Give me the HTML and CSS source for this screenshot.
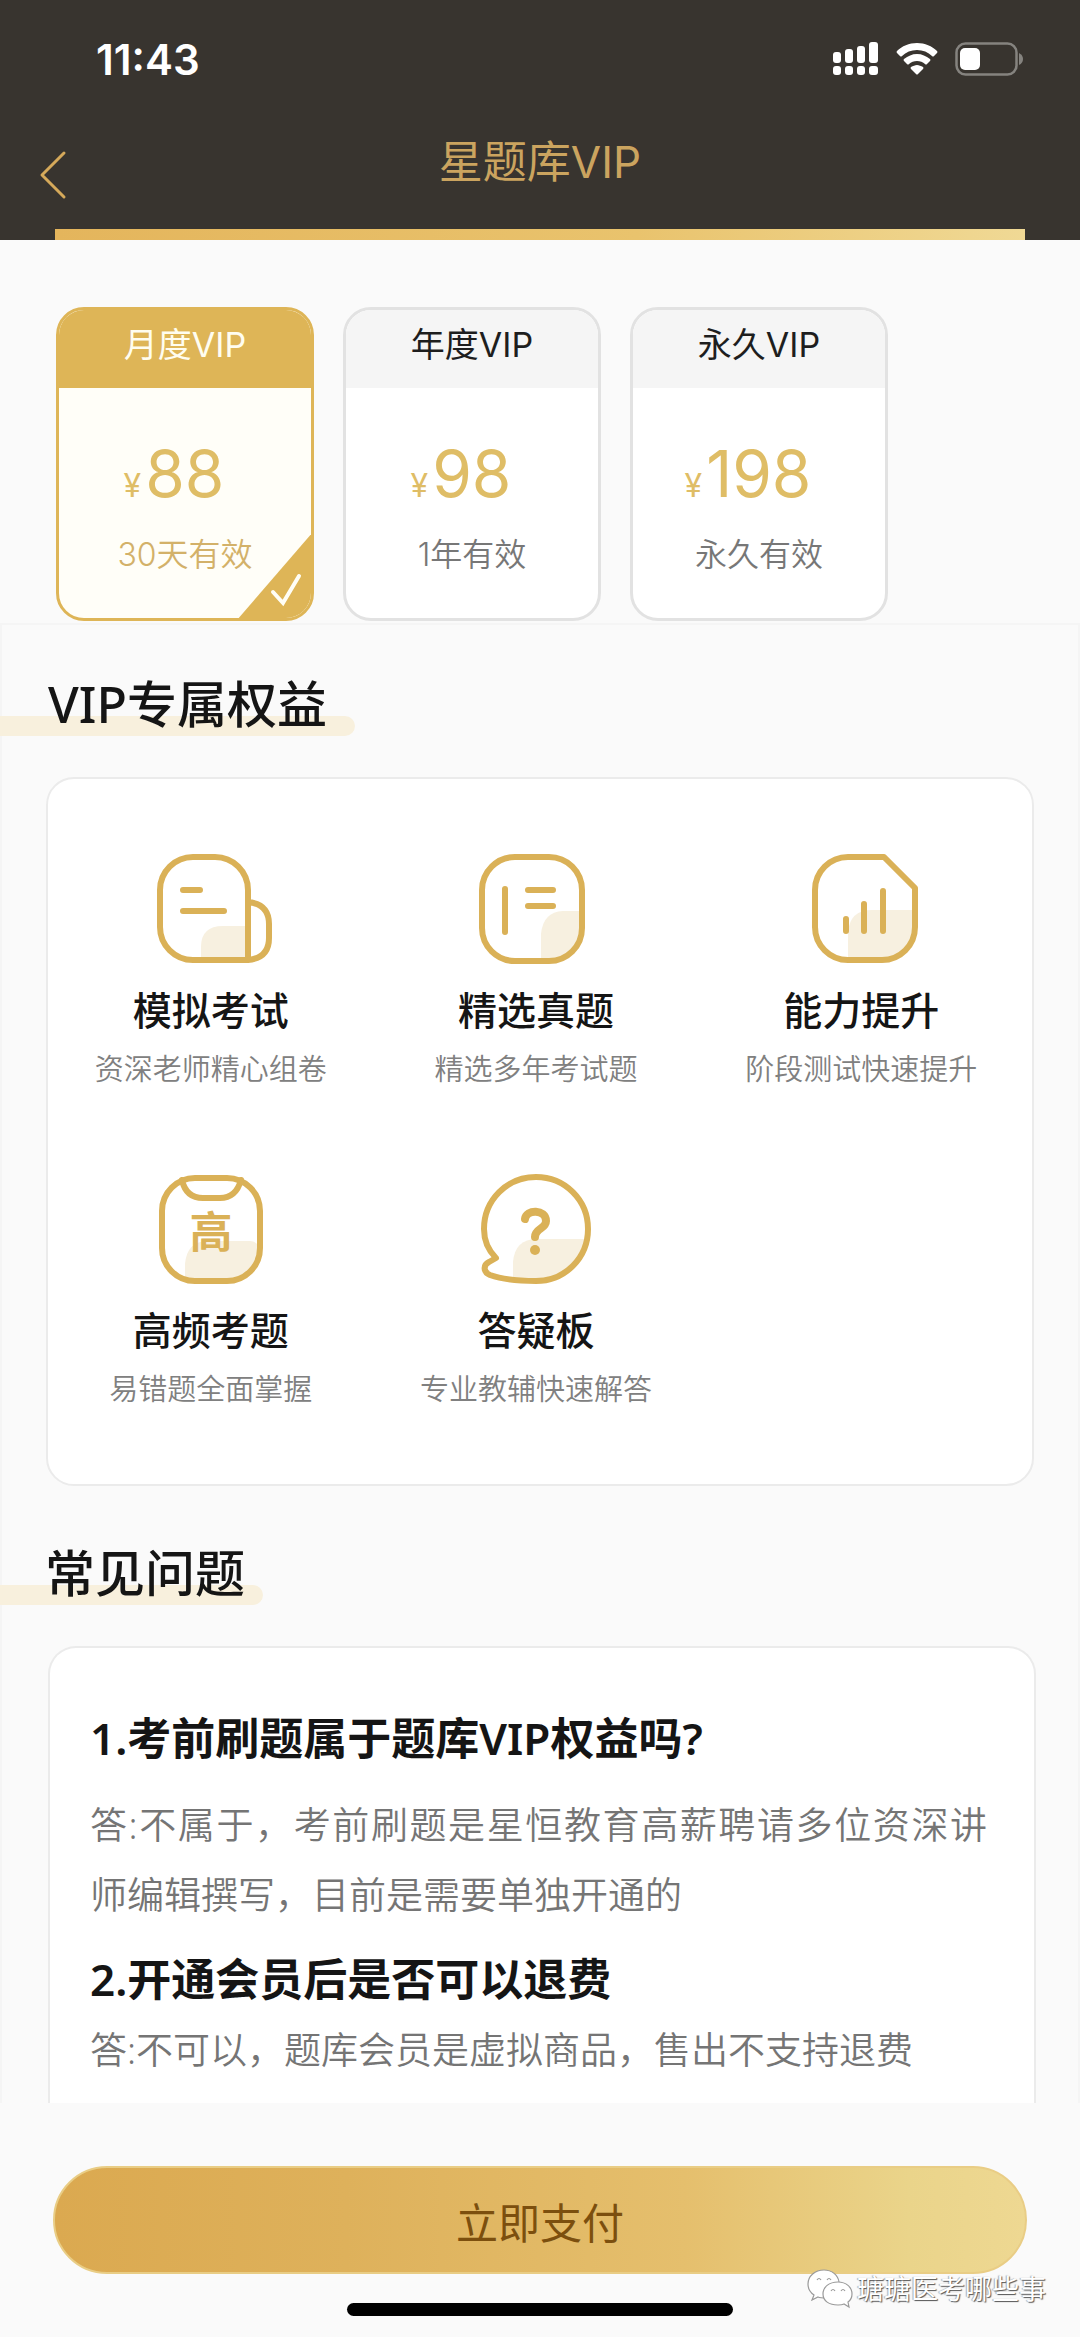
FILE: index.html
```html
<!DOCTYPE html>
<html lang="zh-CN">
<head>
<meta charset="utf-8">
<meta name="viewport" content="width=device-width, initial-scale=1">
<title>星题库VIP</title>
<link rel="stylesheet" href="styles.css">
</head>
<body>
<div class="app">
  <header class="top">
    <div class="status">
      <time class="clock">11:43</time>
      <div class="status-icons">
        <svg width="46" height="34" viewBox="0 0 46 34" fill="#fff" aria-hidden="true">
          <rect x="0" y="10" width="8" height="11" rx="3"/><rect x="12" y="7" width="8" height="14" rx="3"/><rect x="24" y="4" width="8" height="17" rx="3"/><rect x="36" y="0" width="9" height="21" rx="3"/>
          <rect x="0" y="24" width="8" height="9" rx="3"/><rect x="12" y="24" width="8" height="9" rx="3"/><rect x="24" y="24" width="8" height="9" rx="3"/><rect x="36" y="24" width="9" height="9" rx="3"/>
        </svg>
        <svg width="42" height="32" viewBox="0 0 42 32" fill="#fff" aria-hidden="true">
          <path d="M21 0C29 0 36 3 41 8Q42 9 41 10L38 13Q37 14 36 13C32 9 27 7 21 7S10 9 6 13Q5 14 4 13L1 10Q0 9 1 8C6 3 13 0 21 0Z"/>
          <path d="M21 11C26 11 30 13 34 16Q35 17 34 18L31 21Q30 22 29 21C27 19 24 18 21 18S15 19 13 21Q12 22 11 21L8 18Q7 17 8 16C12 13 16 11 21 11Z"/>
          <path d="M21 22C23 22 25 23 27 24Q28 25 27 26L22 31Q21 32 20 31L15 26Q14 25 15 24C17 23 19 22 21 22Z"/>
        </svg>
        <svg width="69" height="34" viewBox="0 0 69 34" aria-hidden="true">
          <rect x="1.5" y="1.500" width="60" height="31" rx="9" fill="none" stroke="#85837f" stroke-width="2.500"/>
          <rect x="5" y="6" width="20" height="22" rx="5" fill="#fff"/>
          <path d="M64 11Q68 13 68 17T64 23Z" fill="#85837f"/>
        </svg>
      </div>
    </div>
    <nav class="nav">
      <button class="back" type="button" aria-label="返回">
        <svg width="28" height="50" viewBox="0 0 28 50" fill="none" stroke="#d5a95a" stroke-width="3" stroke-linecap="round" stroke-linejoin="round" aria-hidden="true"><path d="M25 3L3 25L25 47"/></svg>
      </button>
      <h1 class="title">星题库VIP</h1>
    </nav>
    <div class="banner-edge"></div>
  </header>

  <main>
    <div class="plans">
      <button class="plan plan-active" type="button" aria-pressed="true">
        <span class="plan-name">月度VIP</span>
        <span class="plan-price"><span class="yen">¥</span>88</span>
        <span class="plan-term">30天有效</span>
        <svg class="plan-check" width="76" height="88" viewBox="0 0 76 88" aria-hidden="true"><path d="M76 0V88H0Z" fill="#deb557"/><path d="M36 60L46 71L62 44" fill="none" stroke="#fffef6" stroke-width="4" stroke-linecap="round"/></svg>
      </button>
      <button class="plan" type="button" aria-pressed="false">
        <span class="plan-name">年度VIP</span>
        <span class="plan-price"><span class="yen">¥</span>98</span>
        <span class="plan-term">1年有效</span>
      </button>
      <button class="plan" type="button" aria-pressed="false">
        <span class="plan-name">永久VIP</span>
        <span class="plan-price"><span class="yen">¥</span>198</span>
        <span class="plan-term">永久有效</span>
      </button>
    </div>

    <div class="details">
      <section>
        <h2 class="heading">VIP专属权益</h2>
        <ul class="card benefits">
          <li class="benefit">
            <svg class="icon" width="124" height="110" viewBox="-8 0 124 110" aria-hidden="true">
              <path d="M44 107V93Q44 72 66 72H88V107Z" class="tint"/>
              <path d="M91 106H36A33 33 0 0 1 3 73V36A33 33 0 0 1 36 3H58A33 33 0 0 1 91 36V106Q112 104 112 84V70Q112 50 91 48"/>
              <path d="M26 36H43M26 57H67"/>
            </svg>
            <h3>模拟考试</h3>
            <p>资深老师精心组卷</p>
          </li>
          <li class="benefit">
            <svg class="icon" width="114" height="110" viewBox="0 0 114 110" aria-hidden="true">
              <path d="M62 106V80Q64 58 84 57H103V73Q100 100 72 106Z" class="tint"/>
              <rect x="3" y="3" width="100" height="104" rx="33"/>
              <path d="M26 35V78M49 36H74M49 52H74"/>
            </svg>
            <h3>精选真题</h3>
            <p>精选多年考试题</p>
          </li>
          <li class="benefit">
            <svg class="icon" width="114" height="110" viewBox="-8 0 114 110" aria-hidden="true">
              <path d="M36 106V78Q38 56 60 56H102V73Q98 103 70 106Z" class="tint"/>
              <path d="M36 3H72L103 34V73A33 33 0 0 1 70 106H36A33 33 0 0 1 3 73V36A33 33 0 0 1 36 3Z"/>
              <path d="M34 65V77M52 50V77M71 37V77"/>
            </svg>
            <h3>能力提升</h3>
            <p>阶段测试快速提升</p>
          </li>
          <li class="benefit">
            <svg class="icon" width="106" height="110" viewBox="0 0 106 110" aria-hidden="true">
              <path d="M27 104V90Q29 67 50 67H92Q98 67 101 73Q98 103 72 106H36Z" class="tint"/>
              <rect x="4" y="4" width="98" height="103" rx="33"/>
              <path d="M24 6Q28 24 45 24H62Q78 24 83 6"/>
              <text x="53" y="74" class="glyph">高</text>
            </svg>
            <h3>高频考题</h3>
            <p>易错题全面掌握</p>
          </li>
          <li class="benefit">
            <svg class="icon" width="110" height="110" viewBox="0 0 110 110" aria-hidden="true">
              <path d="M32 103V88Q34 65 56 65H104Q98 98 68 105Q50 106 32 103Z" class="tint"/>
              <path d="M55 3C84 3 107 26 107 55S84 107 55 107C38 107 20 105 9 101C2 98 2 91 8 88L15 84C7 76 3 66 3 55C3 26 26 3 55 3Z"/>
              <path d="M44 45C45 35 65 35 65 47C65 55 54 54 54 63" stroke-width="8"/><circle cx="54" cy="76" r="5" class="dot"/>
            </svg>
            <h3>答疑板</h3>
            <p>专业教辅快速解答</p>
          </li>
        </ul>
      </section>

      <section>
        <h2 class="heading heading-faq">常见问题</h2>
        <dl class="card faq">
          <div class="qa">
            <dt>1.考前刷题属于题库VIP权益吗?</dt>
            <dd>答:不属于，考前刷题是星恒教育高薪聘请多位资深讲师编辑撰写，目前是需要单独开通的</dd>
          </div>
          <div class="qa">
            <dt>2.开通会员后是否可以退费</dt>
            <dd>答:不可以，题库会员是虚拟商品，售出不支持退费</dd>
          </div>
        </dl>
      </section>
    </div>
  </main>

  <footer class="bottom">
    <button class="pay" type="button">立即支付</button>
    <div class="home-bar"></div>
    <div class="watermark">
      <svg width="46" height="40" viewBox="0 0 46 40" fill="#fff" stroke="#9a9a9a" stroke-width="1.200" aria-hidden="true">
        <path d="M17 1C8 1 1 7 1 15C1 20 4 24 7 26L5 31L11 28C13 29 17 29 20 29C30 28 33 21 32 13C31 6 25 1 17 1Z"/>
        <path d="M31 13C22 13 16 18 16 25S22 36 31 36C33 36 35 36 37 35L42 38L41 33C44 31 45 28 45 25C45 18 39 13 31 13Z"/>
        <path d="M10 11Q12 8 14 11M20 11Q22 8 24 11M24 22Q26 19 28 22M34 22Q36 19 38 22" fill="none"/>
      </svg>
      <span>瑭瑭医考哪些事</span>
    </div>
  </footer>
</div>
</body>
</html>
```
FILE: styles.css
```css
* { box-sizing: border-box; margin: 0; padding: 0; }

body {
  background: #fafafa;
  color: #151515;
  font-family: "Noto Sans", "Noto Sans CJK SC", sans-serif;
}

button { border: 0; background: none; font: inherit; color: inherit; cursor: pointer; }
ul { list-style: none; }
svg { display: block; }

.app { display: flex; flex-direction: column; min-height: 100vh; }

/* Header */
.top { background: #38342f; color: #fff; font-family: Inter, "Noto Sans CJK SC", sans-serif; }
.status {
  display: flex;
  align-items: center;
  justify-content: space-between;
  height: 118px;
  padding: 0 56px 0 96px;
}
.clock { font-size: 42px; font-weight: 600; }
.status-icons { display: flex; align-items: center; gap: 17px; }
.nav { display: grid; grid-template-columns: 80px 1fr 80px; height: 111px; }
.back { padding: 32px 0 0 39px; align-self: start; }
.title {
  padding-top: 14px;
  color: #cba45f;
  font-size: 44px;
  font-weight: 400;
  line-height: 60px;
  text-align: center;
}
.banner-edge {
  height: 11px;
  margin: 0 55px;
  background: linear-gradient(90deg, #e4b55c, #e9c36d 60%, #f0d995);
}

/* Plans */
.plans {
  display: flex;
  gap: 29px;
  padding: 67px 56px 2px;
  font-family: Inter, "Noto Sans CJK SC", sans-serif;
}
.plan {
  position: relative;
  display: flex;
  flex-direction: column;
  width: 258px;
  height: 314px;
  overflow: hidden;
  border: 3px solid #e2e2e2;
  border-radius: 28px;
  background: #fff;
  color: #1e1e1e;
}
.plan-name { height: 78px; background: #f5f5f5; font-size: 34px; line-height: 70px; }
.plan-price {
  padding: 46px 22px 0 0;
  color: #dfbd66;
  font-size: 64px;
  line-height: 80px;
}
.yen { margin-right: 4px; font-size: 32px; }
.plan-term { padding-top: 5px; color: #777; font-size: 32px; font-weight: 350; line-height: 48px; }
.plan-active { border-color: #deb557; background: #fffef8; }
.plan-active .plan-name { background: #deb557; color: #fffdf0; }
.plan-active .plan-term { color: #d3b169; }
.plan-check { position: absolute; right: -2px; bottom: -2px; }

/* Sections */
.details { border: 2px solid #f5f5f5; border-bottom: 0; }
.heading {
  position: relative;
  z-index: 0;
  width: fit-content;
  margin-top: 48px;
  padding: 0 28px 0 46px;
  font-size: 50px;
  font-weight: 500;
  line-height: 63px;
}
.heading::before {
  content: "";
  position: absolute;
  z-index: -1;
  inset: 43px 0 0 -2px;
  border-radius: 0 10px 10px 0;
  background: #f8f0dd;
}
.card { border: 2px solid #ebebeb; border-radius: 28px; background: #fff; }
.benefits {
  display: grid;
  grid-template-columns: repeat(3, 1fr);
  row-gap: 74px;
  margin: 41px 44px 0;
  padding: 75px 8px 64px 0;
}
.benefit { display: flex; flex-direction: column; align-items: center; }
.benefit h3 { margin-top: 16px; font-size: 39px; font-weight: 500; line-height: 60px; }
.benefit p { color: #808080; font-size: 29px; font-weight: 350; line-height: 58px; margin-bottom: 2px; }
.icon { fill: none; stroke: #dab157; stroke-width: 6; stroke-linecap: round; stroke-linejoin: round; }
.icon .tint { fill: #f7f0e0; stroke: none; }
.icon .dot { fill: #dab157; stroke: none; }
.icon .glyph {
  fill: #dab157;
  stroke: none;
  font-family: "Noto Sans CJK SC", sans-serif;
  font-size: 43px;
  font-weight: 700;
  text-anchor: middle;
}

.heading-faq { margin-top: 56px; padding: 0 18px 0 43px; }
.faq {
  margin: 41px 42px 0 46px;
  padding: 60px 47px 18px 40px;
  border-bottom: 0;
  border-radius: 28px 28px 0 0;
}
.qa dt { font-size: 44px; font-weight: 600; line-height: 60px; }
.qa dd { margin-top: 6px; color: #757575; font-size: 37px; font-weight: 350; line-height: 70px; text-align: justify; }
.qa:first-child dd { margin: 22px 0 19px; }

/* Footer */
.bottom { position: relative; padding: 63px 53px 21px; }
.pay {
  display: block;
  width: 100%;
  height: 108px;
  border: 2px solid #e9cd85;
  border-radius: 54px;
  background: linear-gradient(90deg, #dba950, #deb15b 30%, #e5bf6d 65%, #ead48a 88%, #eed892);
  color: #7c4f0e;
  font-size: 42px;
}
.home-bar { width: 386px; height: 13px; margin: 29px auto 0; border-radius: 7px; background: #000; }
.watermark {
  position: absolute;
  right: 34px;
  bottom: 28px;
  display: flex;
  align-items: center;
  gap: 4px;
  color: #fff;
  font-size: 27px;
  line-height: 40px;
  text-shadow: 1px 1px 1px #555, -1px 0 1px #aaa;
}
```
